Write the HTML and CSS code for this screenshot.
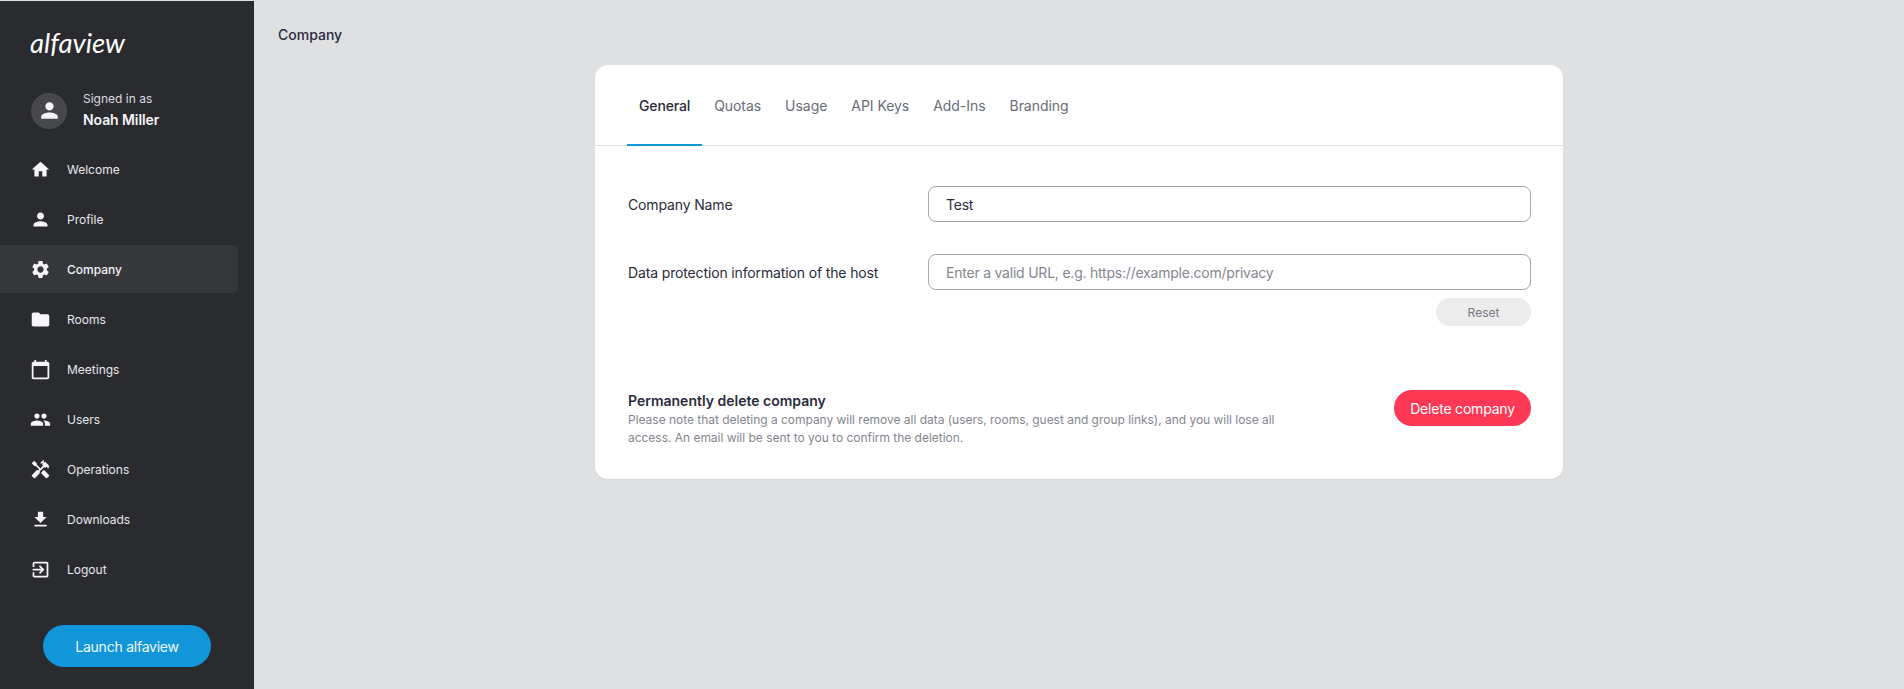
FILE: index.html
```html
<!DOCTYPE html>
<html lang="en">
<head>
<meta charset="utf-8">
<title>Company</title>
<link rel="stylesheet" href="styles.css">
</head>
<body>
<div class="app">
  <aside class="sidebar">
    <div class="logo">alfaview</div>
    <div class="account">
      <div class="avatar"><svg class="avatar-icon" viewBox="0 0 24 24"><path d="M12 12c2.21 0 4-1.79 4-4s-1.79-4-4-4-4 1.79-4 4 1.79 4 4 4zm0 2c-2.67 0-8 1.34-8 4v2h16v-2c0-2.66-5.33-4-8-4z"/></svg></div>
      <div class="account-text">
        <div class="signed">Signed in as</div>
        <div class="name">Noah Miller</div>
      </div>
    </div>
    <nav class="nav">
      <a class="nav-item"><svg class="nav-icon" viewBox="0 0 24 24"><path d="M10 20v-6h4v6h5v-8h3L12 3 2 12h3v8z"/></svg><span>Welcome</span></a>
      <a class="nav-item"><svg class="nav-icon" viewBox="0 0 24 24"><path d="M12 12c2.21 0 4-1.79 4-4s-1.79-4-4-4-4 1.79-4 4 1.79 4 4 4zm0 2c-2.67 0-8 1.34-8 4v2h16v-2c0-2.66-5.33-4-8-4z"/></svg><span>Profile</span></a>
      <a class="nav-item active"><svg class="nav-icon" viewBox="0 0 24 24"><path d="M19.14 12.94c.04-.3.06-.61.06-.94 0-.32-.02-.64-.07-.94l2.03-1.58c.18-.14.23-.41.12-.61l-1.92-3.32c-.12-.22-.37-.29-.59-.22l-2.39.96c-.5-.38-1.03-.7-1.62-.94l-.36-2.54c-.04-.24-.24-.41-.48-.41h-3.84c-.24 0-.43.17-.47.41l-.36 2.54c-.59.24-1.13.57-1.62.94l-2.39-.96c-.22-.08-.47 0-.59.22L2.74 8.87c-.12.21-.08.47.12.61l2.03 1.58c-.05.3-.09.63-.09.94s.02.64.07.94l-2.03 1.58c-.18.14-.23.41-.12.61l1.92 3.32c.12.22.37.29.59.22l2.39-.96c.5.38 1.03.7 1.62.94l.36 2.54c.05.24.24.41.48.41h3.84c.24 0 .44-.17.47-.41l.36-2.54c.59-.24 1.13-.56 1.62-.94l2.39.96c.22.08.47 0 .59-.22l1.92-3.32c.12-.22.07-.47-.12-.61l-2.01-1.58zM12 15.6c-1.98 0-3.6-1.62-3.6-3.6s1.62-3.6 3.6-3.6 3.6 1.62 3.6 3.6-1.62 3.6-3.6 3.6z"/></svg><span>Company</span></a>
      <a class="nav-item"><svg class="nav-icon" viewBox="0 0 24 24"><path d="M10 4H4c-1.1 0-1.99.9-1.99 2L2 18c0 1.1.9 2 2 2h16c1.1 0 2-.9 2-2V8c0-1.1-.9-2-2-2h-8l-2-2z"/></svg><span>Rooms</span></a>
      <a class="nav-item"><svg class="nav-icon" viewBox="0 0 24 24"><path d="M20 3h-1V1h-2v2H7V1H5v2H4c-1.1 0-2 .9-2 2v16c0 1.1.9 2 2 2h16c1.1 0 2-.9 2-2V5c0-1.1-.9-2-2-2zm0 18H4V8h16v13z"/></svg><span>Meetings</span></a>
      <a class="nav-item"><svg class="nav-icon" viewBox="0 0 24 24"><path d="M16 11c1.66 0 2.99-1.34 2.99-3S17.66 5 16 5c-1.66 0-3 1.34-3 3s1.34 3 3 3zm-8 0c1.66 0 2.99-1.34 2.99-3S9.66 5 8 5C6.34 5 5 6.34 5 8s1.34 3 3 3zm0 2c-2.33 0-7 1.17-7 3.5V19h14v-2.5c0-2.33-4.67-3.5-7-3.5zm8 0c-.29 0-.62.02-.97.05 1.16.84 1.97 1.97 1.97 3.45V19h6v-2.5c0-2.33-4.67-3.5-7-3.5z"/></svg><span>Users</span></a>
      <a class="nav-item"><svg class="nav-icon" viewBox="0 0 24 24"><path d="M21.67 18.17l-5.3-5.3h-.99l-2.54 2.54v.99l5.3 5.3c.39.39 1.02.39 1.41 0l2.12-2.12c.39-.38.39-1.02 0-1.41z"/><path d="M17.34 10.19l1.41-1.41 2.12 2.12c1.17-1.17 1.17-3.07 0-4.24l-3.54-3.54-1.41 1.41V1.71l-.7-.71-3.54 3.54.71.71h2.83l-1.41 1.41 1.06 1.06-2.89 2.89-4.13-4.13V5.06L4.83 2.04 2 4.87 5.03 7.9h1.41l4.13 4.13-.85.85H7.6l-5.3 5.3c-.39.39-.39 1.02 0 1.41l2.12 2.12c.39.39 1.02.39 1.41 0l5.3-5.3v-2.12l5.15-5.15 1.06 1.05z"/></svg><span>Operations</span></a>
      <a class="nav-item"><svg class="nav-icon" viewBox="0 0 24 24"><path d="M19 9h-4V3H9v6H5l7 7 7-7zM5 18v2h14v-2H5z"/></svg><span>Downloads</span></a>
      <a class="nav-item"><svg class="nav-icon" viewBox="0 0 24 24"><path d="M10.09 15.59L11.5 17l5-5-5-5-1.41 1.41L12.67 11H3v2h9.67l-2.58 2.59zM19 3H5c-1.11 0-2 .9-2 2v4h2V5h14v14H5v-4H3v4c0 1.1.89 2 2 2h14c1.1 0 2-.9 2-2V5c0-1.1-.9-2-2-2z"/></svg><span>Logout</span></a>
    </nav>
    <div class="launch-wrap"><button class="launch">Launch alfaview</button></div>
  </aside>
  <main class="main">
    <h1 class="page-title">Company</h1>
    <section class="card">
      <div class="tabs">
        <a class="tab selected">General</a>
        <a class="tab">Quotas</a>
        <a class="tab">Usage</a>
        <a class="tab">API Keys</a>
        <a class="tab">Add-Ins</a>
        <a class="tab">Branding</a>
      </div>
      <div class="card-body">
        <div class="field">
          <label class="field-label">Company Name</label>
          <input class="input" type="text" value="Test">
        </div>
        <div class="field field-second">
          <label class="field-label">Data protection information of the host</label>
          <input class="input" type="text" placeholder="Enter a valid URL, e.g. https://example.com/privacy">
        </div>
        <div class="reset-row"><button class="reset">Reset</button></div>
        <div class="danger">
          <div class="danger-text">
            <div class="danger-title">Permanently delete company</div>
            <p class="danger-note">Please note that deleting a company will remove all data (users, rooms, guest and group links), and you will lose all access. An email will be sent to you to confirm the deletion.</p>
          </div>
          <button class="delete">Delete company</button>
        </div>
      </div>
    </section>
  </main>
</div>
</body>
</html>
```
FILE: styles.css
```css
* { box-sizing: border-box; }
html, body { margin: 0; height: 100%; }
body {
  background: #dfe0e2;
  font-family: Inter, "Liberation Sans", sans-serif;
  color: #2a2b3c;
  overflow: hidden;
}
.app { display: flex; height: 689px; padding-top: 1px; }
.sidebar {
  width: 254px;
  flex: none;
  background: #2a2b2f;
  color: #f2f2f7;
  display: flex;
  flex-direction: column;
}
.logo {
  font-family: Lato, sans-serif;
  font-style: italic;
  font-size: 27.5px;
  line-height: 32px;
  color: #fff;
  padding: 26px 0 0 30px;
}
.account { display: flex; align-items: center; gap: 16px; padding: 32px 0 0 31px; }
.avatar {
  width: 36px;
  height: 36px;
  border-radius: 50%;
  background: #47484c;
  display: flex;
  align-items: center;
  justify-content: center;
}
.avatar-icon { width: 25px; height: 25px; fill: #f5f5fb; }
.signed { font-size: 12px; line-height: 16px; color: #dcdce2; }
.name { font-size: 14px; line-height: 20px; font-weight: 600; margin-top: 3px; color: #f5f5fb; letter-spacing: -0.08px; }
.nav { display: flex; flex-direction: column; gap: 2px; width: 238px; margin-top: 15px; }
.nav-item {
  height: 48px;
  display: flex;
  align-items: center;
  gap: 16px;
  padding-left: 30px;
  font-size: 12px;
  color: #e8e8ee;
  border-radius: 0 6px 6px 0;
}
.nav-item.active { background: #36373b; font-weight: 500; color: #f5f5fb; }
.nav-icon { width: 21px; height: 21px; fill: #f5f5fb; flex: none; }
.launch-wrap { margin-top: auto; padding: 0 0 22px 43px; }
.launch {
  width: 168px;
  height: 42px;
  border: 0;
  border-radius: 21px;
  background: #1096d9;
  color: #f2f9fd;
  font: 400 14px Inter, sans-serif;
  letter-spacing: -0.24px;
}
.main { flex: 1; min-width: 0; padding: 25px 24px 0; }
.page-title { margin: 0; font-size: 14px; line-height: 18px; font-weight: 500; color: #2a2b3c; }
.card {
  width: 968px;
  margin: 21px 0 0 317px;
  background: #fff;
  border-radius: 13px;
  box-shadow: 0 1px 2px rgba(0,0,0,.04);
}
.tabs {
  display: flex;
  height: 81px;
  padding: 0 32px;
  border-bottom: 1px solid #dfe0e2;
}
.tab {
  height: 80px;
  padding: 0 12px;
  display: flex;
  align-items: center;
  font-size: 14px;
  color: #6a6b7a;
  letter-spacing: -0.05px;
}
.tab.selected { color: #2a2b3c; font-weight: 500; box-shadow: inset 0 -2px 0 #1096d9; height: 81px; letter-spacing: -0.15px; }
.card-body { padding: 40px 32px 32px; }
.field { display: flex; align-items: center; }
.field-second { margin-top: 32px; }
.field-label { width: 301px; flex: none; font-size: 14px; color: #2a2b3c; letter-spacing: -0.14px; padding-left: 1px; }
.input {
  flex: 1;
  min-width: 0;
  height: 36px;
  border: 1px solid #a5a6ab;
  border-radius: 8px;
  padding: 0 17px;
  font: 400 14px Inter, sans-serif;
  color: #2a2b3c;
  background: #fff;
  letter-spacing: -0.22px;
}
.input::placeholder { color: #85868f; opacity: 1; }
.reset-row { display: flex; justify-content: flex-end; margin-top: 8px; }
.reset {
  width: 95px;
  height: 28px;
  border: 0;
  border-radius: 14px;
  background: #ececec;
  color: #777884;
  font: 400 12px Inter, sans-serif;
}
.danger { display: flex; align-items: flex-start; justify-content: space-between; margin-top: 64px; }
.danger-text { width: 660px; padding-top: 2px; }
.danger-title { font-size: 14px; line-height: 18px; font-weight: 600; color: #2a2b3c; margin-bottom: 1px; padding-left: 1px; }
.danger-note { margin: 0; font-size: 12px; line-height: 18px; color: #85868f; letter-spacing: -0.025px; padding-left: 1px; }
.delete {
  width: 137px;
  height: 36px;
  border: 0;
  border-radius: 18px;
  background: #ff3855;
  color: #fff;
  font: 400 14px Inter, sans-serif;
  letter-spacing: -0.2px;
}
```
